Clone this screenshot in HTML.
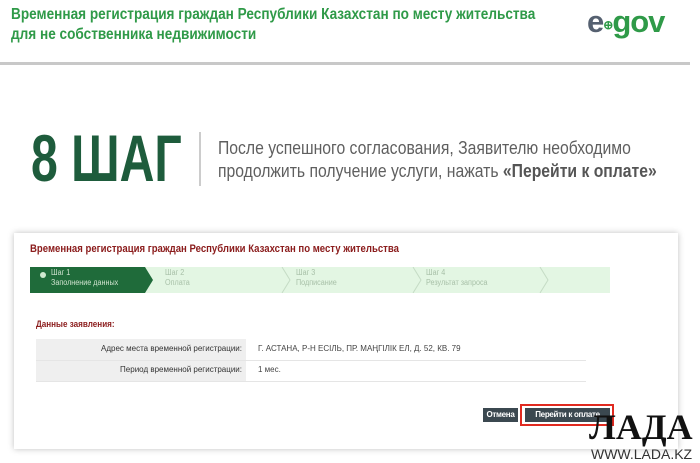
<!DOCTYPE html>
<html><head><meta charset="utf-8"><style>
*{margin:0;padding:0;box-sizing:border-box}
body{width:700px;height:463px;background:#fff;position:relative;overflow:hidden;font-family:"Liberation Sans",sans-serif}
.a{position:absolute;white-space:nowrap}
.c{transform-origin:0 0}
</style></head><body>
<div class="a c" style="left:11px;top:5px;font-size:16px;line-height:20px;font-weight:bold;color:#2f9a48;transform:scaleX(.85)">Временная регистрация граждан Республики Казахстан по месту жительства<br>для не собственника недвижимости</div>
<div class="a" style="left:587px;top:4px;font-size:31px;font-weight:bold;letter-spacing:-1px"><span style="color:#556070">e</span><span style="color:#2f9a48;font-size:12px;vertical-align:3px">⊕</span><span style="color:#2f9a48">gov</span></div>
<div class="a" style="left:0;top:62px;width:690px;height:3px;background:#c8c8c8"></div>
<div class="a c" style="left:31px;top:122px;font-size:66px;line-height:72px;font-weight:bold;color:#1e5c3c;transform:scaleX(.73)">8 ШАГ</div>
<div class="a" style="left:199px;top:132px;width:2px;height:54px;background:#ccc"></div>
<div class="a c" style="left:218px;top:136px;font-size:18.5px;line-height:23px;color:#5f5f5f;transform:scaleX(.85)">После успешного согласования, Заявителю необходимо<br>продолжить получение услуги, нажать <b style="color:#555">«Перейти к оплате»</b></div>
<div class="a" style="left:14px;top:233px;width:664px;height:216px;background:#fff;box-shadow:0 0 6px rgba(0,0,0,.25)"></div>
<div class="a c" style="left:30px;top:243px;font-size:11px;font-weight:bold;color:#8b1c1c;transform:scaleX(.87)">Временная регистрация граждан Республики Казахстан по месту жительства</div>
<div class="a" style="left:30px;top:267px;width:580px;height:26px;background:#e3f6e3"></div>
<svg class="a" style="left:30px;top:267px" width="580" height="26"><polygon points="0,0 115,0 123,13 115,26 0,26" fill="#1f6b3a"/><polyline points="252,0 260,13 252,26" fill="none" stroke="#c5dcc5"/><polyline points="383,0 391,13 383,26" fill="none" stroke="#c5dcc5"/><polyline points="510,0 518,13 510,26" fill="none" stroke="#c5dcc5"/><circle cx="13" cy="8" r="3" fill="#cfe8cf"/></svg>
<div class="a c" style="left:51px;top:268px;font-size:8px;line-height:10px;color:#cfe3cf;transform:scaleX(.9)">Шаг 1<br>Заполнение данных</div>
<div class="a c" style="left:165px;top:268px;font-size:8px;line-height:10px;color:#a8c0a8;transform:scaleX(.9)">Шаг 2<br>Оплата</div>
<div class="a c" style="left:296px;top:268px;font-size:8px;line-height:10px;color:#a8c0a8;transform:scaleX(.9)">Шаг 3<br>Подписание</div>
<div class="a c" style="left:426px;top:268px;font-size:8px;line-height:10px;color:#a8c0a8;transform:scaleX(.9)">Шаг 4<br>Результат запроса</div>
<div class="a c" style="left:36px;top:319px;font-size:9px;font-weight:bold;color:#8b1c1c;transform:scaleX(.9)">Данные заявления:</div>
<div class="a" style="left:36px;top:339px;width:210px;height:42px;background:#efefef"></div>
<div class="a" style="left:36px;top:360px;width:550px;height:1px;background:#e5e5e5"></div>
<div class="a" style="left:36px;top:381px;width:550px;height:1px;background:#e5e5e5"></div>
<div class="a" style="left:36px;top:344px;width:206px;text-align:right;font-size:8px;color:#333">Адрес места временной регистрации:</div>
<div class="a" style="left:36px;top:365px;width:206px;text-align:right;font-size:8px;color:#333">Период временной регистрации:</div>
<div class="a" style="left:258px;top:344px;font-size:8px;color:#444">Г. АСТАНА, Р-Н ЕСІЛЬ, ПР. МАҢГІЛІК ЕЛ, Д. 52, КВ. 79</div>
<div class="a" style="left:258px;top:365px;font-size:8px;color:#444">1 мес.</div>
<div class="a" style="left:483px;top:408px;width:35px;height:14px;background:#3b4850;color:#fff;font-size:8px;font-weight:bold;text-align:center;line-height:14px;letter-spacing:-.3px">Отмена</div>
<div class="a" style="left:525px;top:408px;width:85px;height:14px;background:#3b4850;color:#fff;font-size:8px;font-weight:bold;text-align:center;line-height:14px;letter-spacing:-.3px">Перейти к оплате</div>
<div class="a" style="left:520px;top:404px;width:94px;height:22px;border:2px solid #e02a20"></div>
<div class="a" style="left:589px;top:408px;font-size:36px;line-height:38px;font-weight:bold;font-family:'Liberation Serif',serif;color:#111">ЛАДА</div>
<div class="a" style="left:591px;top:446px;font-size:14px;color:#333">WWW.LADA.KZ</div>
</body></html>
